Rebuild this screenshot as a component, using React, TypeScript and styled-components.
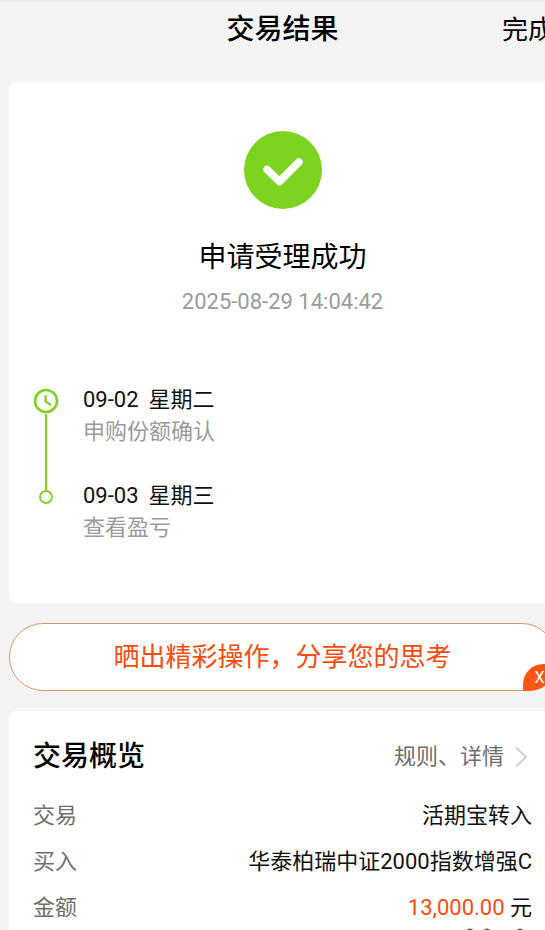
import React from "react";
import styled, { createGlobalStyle } from "styled-components";

const GlobalStyle = createGlobalStyle`
  * { box-sizing: border-box; }
  html, body { margin: 0; height: 100%; overflow: hidden; }
  body {
    background: #f4f4f4;
    color: #111;
    font-family: Roboto, "Noto Sans CJK SC", sans-serif;
  }
  button, a { font-family: inherit; }
`;

const Page = styled.main`
  width: calc(100% + 20px);
  display: flex;
  flex-direction: column;
  border-top: 2px solid #ebebeb;
  padding: 0 9px;
`;

const TopBar = styled.header`
  display: grid;
  grid-template-columns: 1fr auto 1fr;
  align-items: center;
  height: 80px;
  padding-bottom: 24px;
`;

const Title = styled.h1`
  grid-column: 2;
  margin: 0;
  font-size: 28px;
  line-height: 40px;
  font-weight: 500;
  color: #000;
`;

const DoneButton = styled.button`
  justify-self: end;
  padding: 0 2px;
  border: 0;
  background: none;
  font-size: 26px;
  line-height: 40px;
  color: #000;
`;

const Card = styled.section`
  background: #fff;
  border-radius: 8px;
  padding: 0 24px;
`;

const ResultCard = styled(Card)`
  padding-top: 49px;
  padding-bottom: 59px;
`;

const Status = styled.div`
  display: flex;
  flex-direction: column;
  align-items: center;
`;

const StatusText = styled.h2`
  margin: 29px 0 0;
  font-size: 28px;
  line-height: 40px;
  font-weight: 400;
  color: #000;
`;

const StatusTime = styled.time`
  margin-top: 8px;
  font-size: 22px;
  line-height: 32px;
  color: #9b9b9b;
`;

const Timeline = styled.ol`
  list-style: none;
  margin: 66px 0 0;
  padding: 0;
`;

const Step = styled.li`
  display: grid;
  grid-template-columns: 26px 1fr;
  column-gap: 24px;
`;

const Rail = styled.div<{ $last?: boolean }>`
  display: flex;
  flex-direction: column;
  align-items: center;
  padding-top: ${(p) => (p.$last ? 10 : 4)}px;

  svg { flex: none; }
`;

const Line = styled.span`
  flex: 1;
  width: 2px;
  margin-bottom: -10px;
  background: #7ed321;
`;

const StepBody = styled.div<{ $last?: boolean }>`
  padding-bottom: ${(p) => (p.$last ? 0 : 32)}px;
  font-size: 22px;
  line-height: 32px;
`;

const StepDate = styled.div`
  display: flex;
  gap: 10px;
`;

const StepNote = styled.div`
  color: #9b9b9b;
`;

const Banner = styled.div`
  position: relative;
  margin: 20px 0;
`;

const ShareButton = styled.button`
  width: 100%;
  height: 68px;
  padding: 0;
  border: 1px solid #e09468;
  border-radius: 34px;
  background: #fff;
  color: #f94c0c;
  font-size: 26px;
  line-height: 40px;
`;

const CloseButton = styled.button`
  position: absolute;
  right: 0;
  bottom: 0;
  width: 33px;
  height: 27px;
  padding: 0;
  border: 0;
  border-radius: 24px 0 32px 0;
  background: #fc5610;
  color: #fff;
  font-size: 16px;
  line-height: 26px;
`;

const OverviewHead = styled.div`
  display: flex;
  align-items: center;
  justify-content: space-between;
  padding: 26px 0 16px;
`;

const OverviewTitle = styled.h2`
  margin: 0;
  font-size: 28px;
  line-height: 40px;
  font-weight: 500;
  color: #000;
`;

const RulesLink = styled.a`
  display: flex;
  align-items: center;
  gap: 10px;
  padding-right: 4px;
  color: #6e6e6e;
  font-size: 22px;
  line-height: 32px;
  text-decoration: none;
`;

const Details = styled.dl`
  margin: 0;
`;

const DetailRow = styled.div`
  display: flex;
  justify-content: space-between;
  font-size: 22px;
  line-height: 46px;
`;

const Label = styled.dt`
  color: #6e6e6e;
`;

const Value = styled.dd`
  margin: 0;
`;

const Amount = styled.span`
  color: #fc4c10;
`;

const CardFoot = styled.div`
  display: flex;
  justify-content: flex-end;
  height: 46px;
  margin-top: -3px;
  padding-right: 7px;
`;

const SuccessIcon = () => (
  <svg width="78" height="78" viewBox="0 0 78 78" aria-hidden="true">
    <circle cx="39" cy="39" r="39" fill="#7ed321" />
    <path d="M23 38.500L35.500 50.500L55 31" fill="none" stroke="#fff" strokeWidth="7.500" strokeLinecap="round" strokeLinejoin="round" />
  </svg>
);

const ClockIcon = () => (
  <svg width="26" height="26" viewBox="0 0 26 26" aria-hidden="true">
    <circle cx="13" cy="13" r="11" fill="#fff" stroke="#7ed321" strokeWidth="2.600" />
    <path d="M12.500 7V13.500L18 17" fill="none" stroke="#7ed321" strokeWidth="2.200" />
  </svg>
);

const DotIcon = () => (
  <svg width="14" height="14" viewBox="0 0 14 14" aria-hidden="true">
    <circle cx="7" cy="7" r="6" fill="#fff" stroke="#7ed321" strokeWidth="1.800" />
  </svg>
);

const ChevronIcon = () => (
  <svg width="14" height="22" viewBox="0 0 14 22" aria-hidden="true">
    <path d="M2 1.500L12 11L2 20.500" fill="none" stroke="#cfcfcf" strokeWidth="2" />
  </svg>
);

const FootMarks = () => (
  <svg width="60" height="10" viewBox="0 0 60 10" aria-hidden="true">
    <g fill="none" stroke="#555" strokeWidth="2">
      <path d="M1 4Q5 -1 9 4" />
      <path d="M18 4Q22 -1 26 4" />
      <path d="M51 4Q55 -1 59 4" />
    </g>
  </svg>
);

export default function App() {
  return (
    <>
      <GlobalStyle />
      <Page>
        <TopBar>
          <Title>交易结果</Title>
          <DoneButton type="button">完成</DoneButton>
        </TopBar>

        <ResultCard>
          <Status>
            <SuccessIcon />
            <StatusText>申请受理成功</StatusText>
            <StatusTime dateTime="2025-08-29T14:04:42">2025-08-29 14:04:42</StatusTime>
          </Status>
          <Timeline>
            <Step>
              <Rail>
                <ClockIcon />
                <Line />
              </Rail>
              <StepBody>
                <StepDate><span>09-02</span><span>星期二</span></StepDate>
                <StepNote>申购份额确认</StepNote>
              </StepBody>
            </Step>
            <Step>
              <Rail $last>
                <DotIcon />
              </Rail>
              <StepBody $last>
                <StepDate><span>09-03</span><span>星期三</span></StepDate>
                <StepNote>查看盈亏</StepNote>
              </StepBody>
            </Step>
          </Timeline>
        </ResultCard>

        <Banner>
          <ShareButton type="button">晒出精彩操作，分享您的思考</ShareButton>
          <CloseButton type="button" aria-label="关闭">X</CloseButton>
        </Banner>

        <Card>
          <OverviewHead>
            <OverviewTitle>交易概览</OverviewTitle>
            <RulesLink href="#rules">规则、详情<ChevronIcon /></RulesLink>
          </OverviewHead>
          <Details>
            <DetailRow><Label>交易</Label><Value>活期宝转入</Value></DetailRow>
            <DetailRow><Label>买入</Label><Value>华泰柏瑞中证2000指数增强C</Value></DetailRow>
            <DetailRow><Label>金额</Label><Value><Amount>13,000.00</Amount> 元</Value></DetailRow>
          </Details>
          <CardFoot>
            <FootMarks />
          </CardFoot>
        </Card>
      </Page>
    </>
  );
}
